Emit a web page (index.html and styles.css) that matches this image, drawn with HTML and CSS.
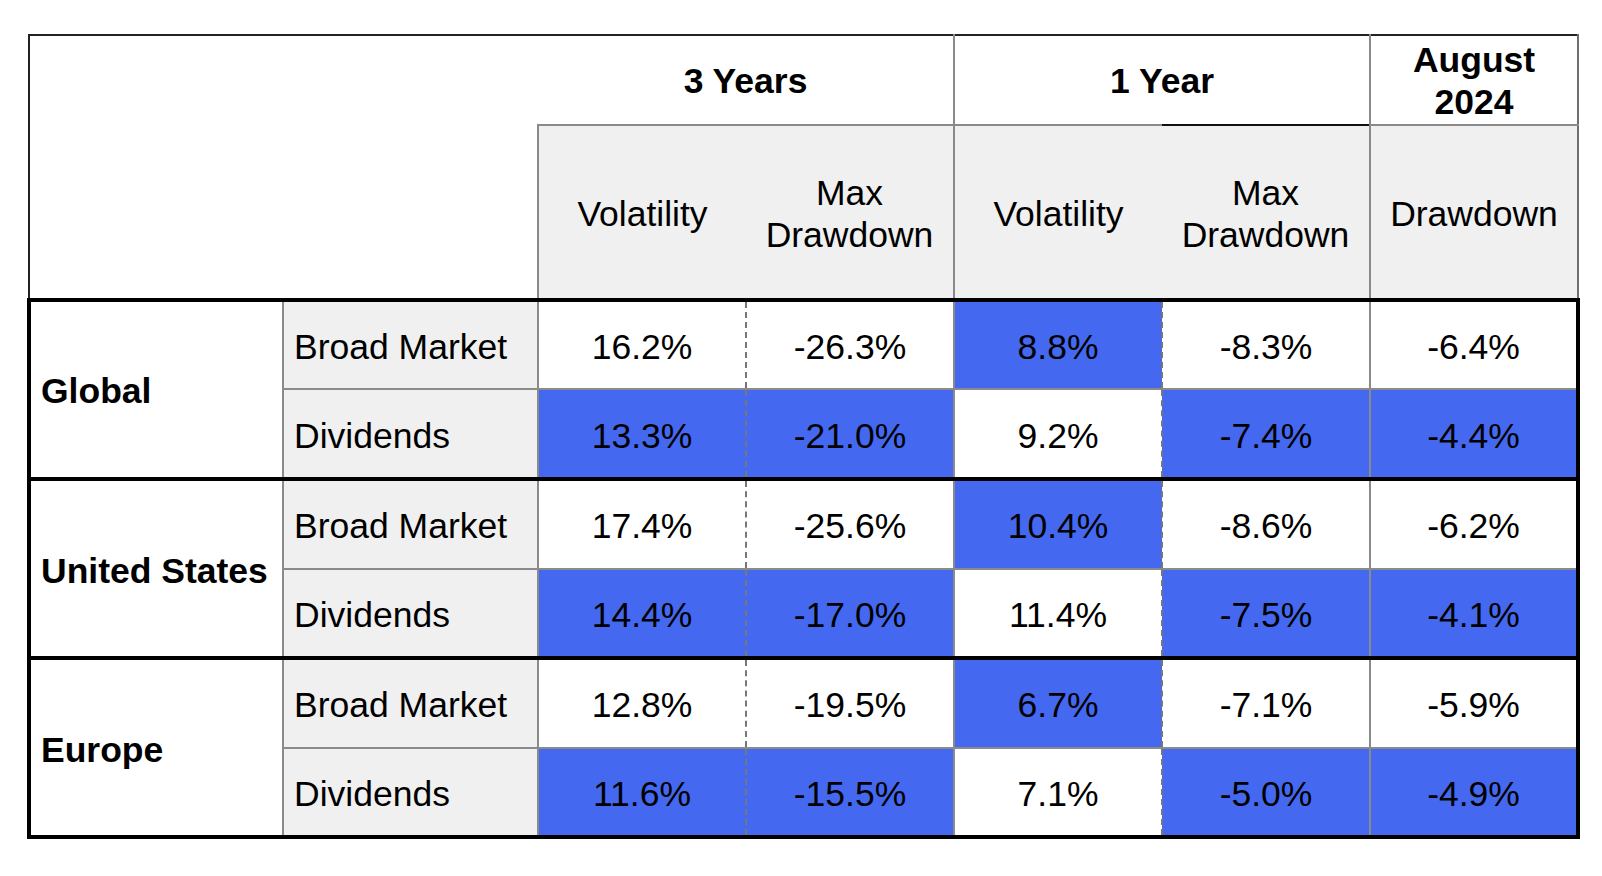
FILE: index.html
```html
<!DOCTYPE html>
<html lang="en">
<head>
<meta charset="utf-8">
<title>Volatility and Drawdown</title>
<link rel="stylesheet" href="styles.css">
</head>
<body>
<div class="page">
<table class="risk">
  <colgroup>
    <col class="c-region"><col class="c-sub">
    <col class="c-num"><col class="c-num"><col class="c-num"><col class="c-num"><col class="c-num">
  </colgroup>
  <thead>
    <tr class="h1">
      <th colspan="2" class="corner-top"></th>
      <th colspan="2" class="period p3">3 Years</th>
      <th colspan="2" class="period p1">1 Year</th>
      <th class="period aug">August<br>2024</th>
    </tr>
    <tr class="h2">
      <th colspan="2" class="corner-bot"></th>
      <th class="metric">Volatility</th>
      <th class="metric sep">Max<br>Drawdown</th>
      <th class="metric y1v">Volatility</th>
      <th class="metric y1d sep">Max<br>Drawdown</th>
      <th class="metric last">Drawdown</th>
    </tr>
  </thead>
  <tbody class="group">
    <tr class="first">
      <th rowspan="2" class="region">Global</th>
      <th class="sub">Broad Market</th>
      <td class="dl">16.2%</td><td class="dr sep">-26.3%</td>
      <td class="dl hi">8.8%</td><td class="dr sep">-8.3%</td>
      <td class="last">-6.4%</td>
    </tr>
    <tr class="final">
      <th class="sub">Dividends</th>
      <td class="dl hi">13.3%</td><td class="dr sep hi">-21.0%</td>
      <td class="dl">9.2%</td><td class="dr sep hi">-7.4%</td>
      <td class="last hi">-4.4%</td>
    </tr>
  </tbody>
  <tbody class="group">
    <tr class="first">
      <th rowspan="2" class="region">United States</th>
      <th class="sub">Broad Market</th>
      <td class="dl">17.4%</td><td class="dr sep">-25.6%</td>
      <td class="dl hi">10.4%</td><td class="dr sep">-8.6%</td>
      <td class="last">-6.2%</td>
    </tr>
    <tr class="final">
      <th class="sub">Dividends</th>
      <td class="dl hi">14.4%</td><td class="dr sep hi">-17.0%</td>
      <td class="dl">11.4%</td><td class="dr sep hi">-7.5%</td>
      <td class="last hi">-4.1%</td>
    </tr>
  </tbody>
  <tbody class="group">
    <tr class="first">
      <th rowspan="2" class="region">Europe</th>
      <th class="sub">Broad Market</th>
      <td class="dl">12.8%</td><td class="dr sep">-19.5%</td>
      <td class="dl hi">6.7%</td><td class="dr sep">-7.1%</td>
      <td class="last">-5.9%</td>
    </tr>
    <tr class="final">
      <th class="sub">Dividends</th>
      <td class="dl hi">11.6%</td><td class="dr sep hi">-15.5%</td>
      <td class="dl">7.1%</td><td class="dr sep hi">-5.0%</td>
      <td class="last hi">-4.9%</td>
    </tr>
  </tbody>
</table>
</div>
</body>
</html>
```

FILE: styles.css
```css
html, body {
  margin: 0;
  padding: 0;
  background: #ffffff;
}

.page {
  padding: 34px 0 0 27px;
}

.risk {
  border-collapse: collapse;
  table-layout: fixed;
  width: 1550px;
  font-family: "Liberation Sans", Arial, sans-serif;
  font-size: 35.5px;
  line-height: 1.18;
  color: #000;
}

.risk .c-region { width: 254px; }
.risk .c-sub { width: 255px; }
.risk .c-num { width: 208px; }

.risk th,
.risk td {
  padding: 6px 0 0 0;
  border: 0 none;
  text-align: center;
  vertical-align: middle;
  font-weight: normal;
}

/* header row 1 */
.risk .h1 th {
  height: 80px;
  padding-top: 4px;
  border-top: 2px solid #222;
  font-weight: bold;
}
.risk .h1 .corner-top {
  border-left: 2px solid #222;
}
.risk .h1 .p3 {
  border-right: 2px solid #8a8a8a;
  border-bottom: 2px solid #8a8a8a;
}
.risk .h1 .p1 {
  border-right: 2px solid #8a8a8a;
}
.risk .h1 .aug {
  border-right: 2px solid #6e6e6e;
  border-bottom: 2px solid #8a8a8a;
}

/* header row 2 */
.risk .h2 th {
  height: 166px;
  background: #f0f0f0;
}
.risk .h2 .corner-bot {
  background: #ffffff;
  border-left: 2px solid #222;
  border-right: 2px solid #8a8a8a;
}
.risk .h2 .sep {
  border-right: 2px solid #8a8a8a;
}
.risk .h2 .y1v {
  border-top: 2px solid #8a8a8a;
}
.risk .h2 .y1d {
  border-top: 2px solid #111;
}
.risk .h2 .last {
  border-right: 2px solid #6e6e6e;
}

/* data */
.risk td,
.risk .sub {
  height: 80.6px;
  border: 2px solid #8a8a8a;
}
.risk td.dl {
  border-right: 2px dashed #777;
}
.risk td.dr {
  border-left: 2px dashed #777;
}
.risk td.last {
  border-right: 4px solid #000;
}
.risk .first td,
.risk .first th {
  border-top: 4px solid #000;
}
.risk .final td,
.risk .final th {
  border-bottom: 4px solid #000;
}

.risk .sub {
  background: #f0f0f0;
  text-align: left;
  padding-left: 10px;
}

.risk .first .region {
  background: #ffffff;
  text-align: left;
  padding-left: 10px;
  font-weight: bold;
  border-left: 4px solid #000;
  border-top: 4px solid #000;
  border-bottom: 4px solid #000;
  border-right: 2px solid #8a8a8a;
  white-space: nowrap;
}

.risk .hi {
  background: #4469f0;
}
```
